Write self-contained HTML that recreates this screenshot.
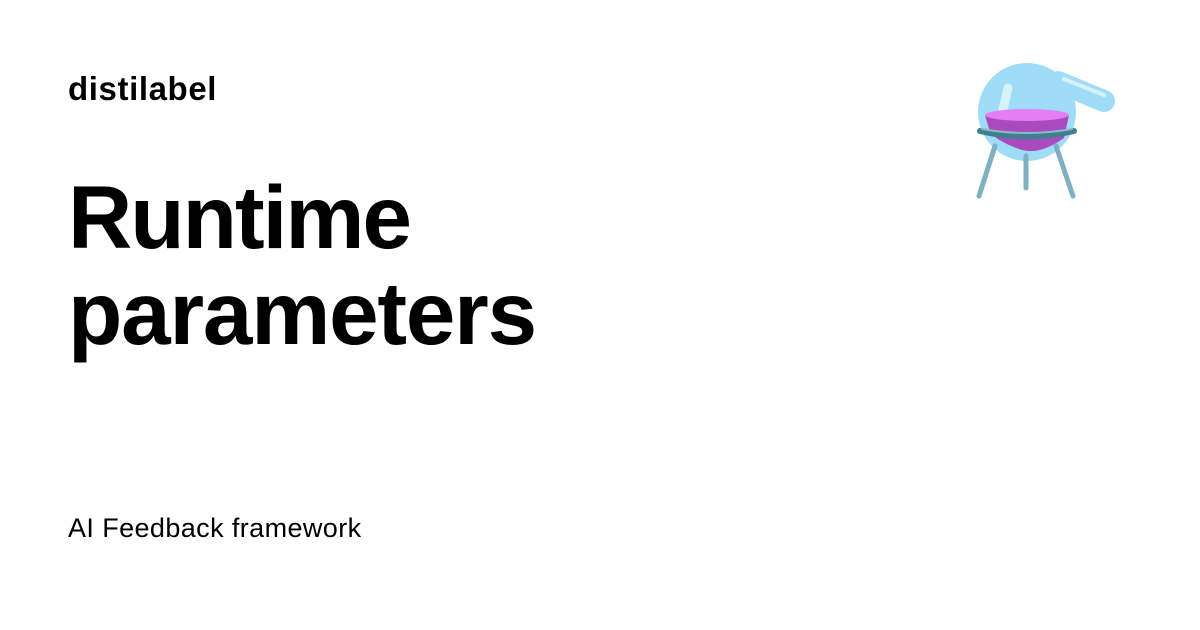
<!DOCTYPE html>
<html><head><style>
body{margin:0;width:1200px;height:630px;background:#fff;position:relative;overflow:hidden;font-family:"Liberation Sans",sans-serif;color:#000}
.a{position:absolute;left:68px;white-space:nowrap}
</style></head><body>
<div class="a" style="top:70px;font-size:33px;font-weight:bold;letter-spacing:0.6px">distilabel</div>
<div class="a" style="top:169px;font-size:89px;font-weight:bold;line-height:96px;letter-spacing:-2px">Runtime<br><span style="letter-spacing:-1.2px">parameters</span></div>
<div class="a" style="top:513px;font-size:27px;letter-spacing:0.4px">AI Feedback framework</div>
<svg style="position:absolute;left:960px;top:50px" width="170" height="160" viewBox="960 50 170 160">
<g stroke-linecap="round">
<line x1="1058" y1="82" x2="1104" y2="101" stroke="#9fdcf7" stroke-width="22"/>
<circle cx="1027" cy="112" r="49" fill="#9fdcf7"/>
<path d="M1064 79 L1104 95" stroke="#d8f2fc" stroke-width="4"/>
<path d="M1008 88 L1001 118" stroke="#d8f2fc" stroke-width="9"/>
<path d="M985 115 L1069 115 L1064 138 Q1040 155 1022 150 Q998 142 990 132 Z" fill="#a94bbf"/>
<ellipse cx="1027" cy="115" rx="42" ry="6" fill="#e57ef5"/>
<path d="M980 131 Q1027 142 1074 131" stroke="#3f7f90" stroke-width="6" fill="none"/>
<path d="M982 129 Q1027 137 1072 129" stroke="#8fb8c5" stroke-width="2" fill="none"/>
<line x1="995" y1="146" x2="979" y2="196" stroke="#7fb0c2" stroke-width="5"/>
<line x1="1026" y1="156" x2="1026" y2="188" stroke="#7fb0c2" stroke-width="5"/>
<line x1="1056" y1="146" x2="1073" y2="196" stroke="#7fb0c2" stroke-width="5"/>
</g></svg>
</body></html>
